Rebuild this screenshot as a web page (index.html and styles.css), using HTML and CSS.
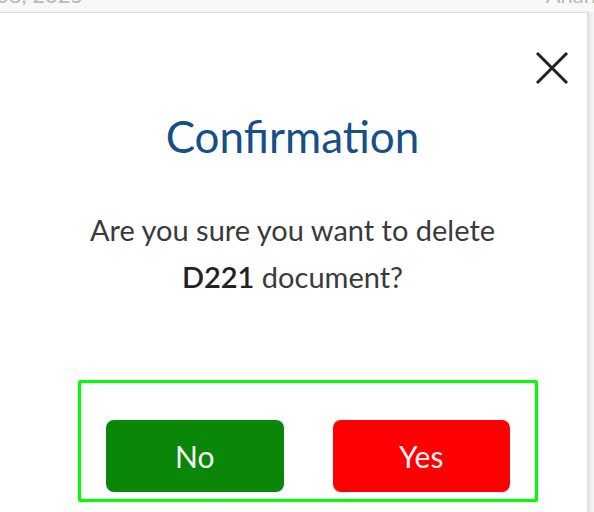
FILE: index.html
```html
<!DOCTYPE html>
<html lang="en">
<head>
<meta charset="utf-8"/>
<meta content="width=device-width, initial-scale=1.0" name="viewport"/>
<title>Confirmation</title>
<link rel="stylesheet" href="styles.css">
</head>
<body>
<div class="topbar">
<span class="date">08, 2025</span>
<span class="owner">Ananth</span>
</div>
<div class="modal">
<div class="modal-head">
<button class="close" aria-label="Close">
<svg width="34" height="34" viewBox="0 0 34 34"><path d="M2 2 L32 32 M32 2 L2 32" stroke="#222" stroke-width="3" fill="none"/></svg>
</button>
</div>
<h2 class="title">Confirmation</h2>
<p class="message">Are you sure you want to delete<br><strong>D221</strong> document?</p>
<div class="actions">
<button class="btn no">No</button>
<button class="btn yes">Yes</button>
</div>
</div>
</body>
</html>
```

FILE: styles.css
```css
* {
  box-sizing: border-box;
}

html,
body {
  height: 100%;
}

body {
  font-family: 'Lato', 'Open Sans', sans-serif;
  margin: 0;
  padding: 0;
  background-color: #f3f3f3;
  color: #3a3a3a;
  overflow: hidden;
}

.topbar {
  height: 12px;
  overflow: hidden;
  display: flex;
  justify-content: space-between;
  background-color: #f8f8f8;
}

.topbar span {
  display: block;
  margin-top: -17px;
  font-size: 22px;
  line-height: 24px;
  color: #b9b9b9;
  white-space: nowrap;
}

.date {
  margin-left: -4px;
}

.owner {
  margin-right: -22px;
}

.modal {
  margin: 0 6px 0 -3px;
  height: 520px;
  background-color: #fff;
  border: 1px solid #dcdcdc;
  box-shadow: 2px 0 3px rgba(0, 0, 0, 0.08);
}

.modal-head {
  display: flex;
  justify-content: flex-end;
  padding: 38px 18px 0 0;
}

.close {
  background: none;
  border: none;
  padding: 0;
  width: 34px;
  height: 34px;
  cursor: pointer;
}

.close svg {
  display: block;
}

.title {
  margin: 26px 0 0;
  text-align: center;
  font-size: 44px;
  font-weight: 400;
  line-height: 50px;
  color: #184f87;
}

.message {
  margin: 45px 0 0;
  text-align: center;
  font-size: 29px;
  line-height: 47px;
}

.message strong {
  font-weight: 600;
  color: #222;
}

.actions {
  display: flex;
  gap: 49px;
  width: 460px;
  margin: 80px 0 0 80px;
  padding: 37px 25px 7px;
  border: 3px solid #00ff00;
  border-radius: 2px;
}

.btn {
  width: 178px;
  height: 72px;
  border: none;
  border-radius: 8px;
  font-family: inherit;
  font-size: 30px;
  color: #f4f4f4;
  cursor: pointer;
}

.btn.no {
  background-color: #0a8708;
}

.btn.yes {
  background-color: #ff0000;
}
```
